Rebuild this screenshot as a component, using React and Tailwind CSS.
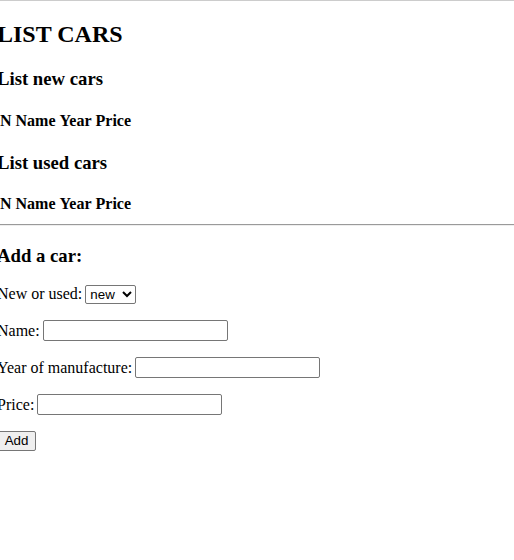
function CarTable() {
    return (
        <table className="border-separate border-spacing-[2px]">
            <thead>
                <tr>
                    <th className="p-[1px] font-bold leading-[18px]">N</th>
                    <th className="p-[1px] font-bold leading-[18px]">Name</th>
                    <th className="p-[1px] font-bold leading-[18px]">Year</th>
                    <th className="p-[1px] font-bold leading-[18px]">Price</th>
                </tr>
            </thead>
            <tbody></tbody>
        </table>
    );
}

export default function App() {
    const field = "w-[185px] h-[21px] border border-[#767676] rounded-[2px] px-[2px] bg-white font-['Liberation_Sans',sans-serif] text-[13.33px]";

    return (
        <div className="min-h-screen bg-white text-black font-['Liberation_Serif','Times_New_Roman',serif] text-base ml-[-3px]">
            <hr className="border-0 border-t border-[#cccccc] m-0 ml-[3px]" />

            <h2 className="text-[24px] font-bold leading-[27px] mt-[20px] mb-[20px]">LIST CARS</h2>

            <h3 className="text-[18.72px] font-bold leading-[21px] mb-[20px]">List new cars</h3>
            <CarTable />

            <h3 className="text-[18.72px] font-bold leading-[21px] mt-[19px] mb-[19px]">List used cars</h3>
            <CarTable />

            <hr className="border-0 border-t border-b border-t-[#9a9a9a] border-b-[#eeeeee] mt-[8px] mb-0 ml-[3px]" />

            <h3 className="text-[18.72px] font-bold leading-[21px] mt-[19px] mb-[18px]">Add a car:</h3>

            <div className="flex items-center gap-[3px] h-[20px] mb-[16px]">
                <span>New or used:</span>
                <select defaultValue="new" className="h-[19px] w-[51px] border border-[#767676] rounded-[2px] bg-white font-['Liberation_Sans',sans-serif] text-[13.33px] appearance-auto">
                    <option value="new">new</option>
                    <option value="used">used</option>
                </select>
            </div>

            <div className="flex items-center gap-[3px] h-[21px] mb-[16px]">
                <span>Name:</span>
                <input type="text" className={field} />
            </div>

            <div className="flex items-center gap-[3px] h-[21px] mb-[16px]">
                <span>Year of manufacture:</span>
                <input type="text" className={field} />
            </div>

            <div className="flex items-center gap-[3px] h-[21px] mb-[16px]">
                <span>Price:</span>
                <input type="text" className={field} />
            </div>

            <button className="block h-[20px] w-[39px] bg-[#efefef] border border-[#767676] rounded-[2px] font-['Liberation_Sans',sans-serif] text-[13.33px] leading-none">Add</button>
        </div>
    );
}
